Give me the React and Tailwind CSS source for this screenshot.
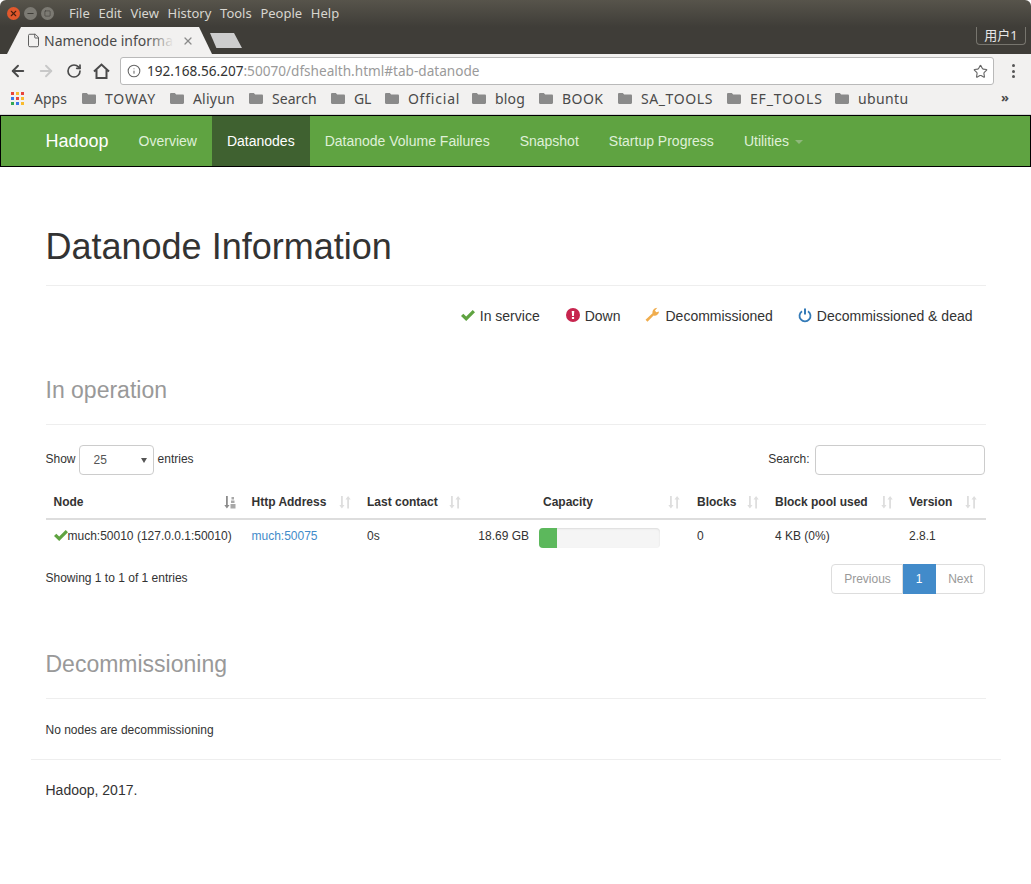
import { ArrowLeft, ArrowRight, RotateCw, Info, Star, File, X, Minus, Square } from 'lucide-react';

const bookmarks = [
  ['TOWAY', 'w-[88px]', 'tracking-[0.9px]'],
  ['Aliyun', 'w-[79px]', 'tracking-[0.25px]'],
  ['Search', 'w-[82px]', 'tracking-[0.1px]'],
  ['GL', 'w-[54px]', 'tracking-[0px]'],
  ['Official', 'w-[87px]', 'tracking-[0.8px]'],
  ['blog', 'w-[67px]', 'tracking-[0.25px]'],
  ['BOOK', 'w-[79px]', 'tracking-[0.5px]'],
  ['SA_TOOLS', 'w-[109px]', 'tracking-[0.6px]'],
  ['EF_TOOLS', 'w-[108px]', 'tracking-[0.9px]'],
  ['ubuntu', 'w-[80px]', 'tracking-[0.4px]'],
];

function Folder() {
  return (
    <svg width="14" height="11" viewBox="0 0 14 11" className="shrink-0">
      <path d="M0 1.200C0 .5.500 0 1.200 0h3.600l1.400 1.500h6.600c.7 0 1.200.5 1.200 1.200v7.100c0 .7-.5 1.200-1.200 1.200H1.200C.5 11 0 10.500 0 9.800z" fill="#8a8a8a" />
    </svg>
  );
}

function AppsGrid() {
  const colors = ['#e8453c', '#f9bb2d', '#e8453c', '#3b78e7', '#e8453c', '#f9bb2d', '#34a853', '#3b78e7', '#f9bb2d'];
  return (
    <div className="grid grid-cols-3 gap-[2px] w-[13px] h-[13px]">
      {colors.map((c, i) => (
        <svg key={i} width="3" height="3"><rect width="3" height="3" fill={c} /></svg>
      ))}
    </div>
  );
}

function SortIcon({ active }) {
  return (
    <svg width="12" height="13" viewBox="0 0 12 13" className="shrink-0">
      <path d="M2 0h1.800v9H5.500L2.900 12.500 0.300 9H2z" fill={active ? '#8c8c8c' : '#dedede'} />
      {active ? (
        <path d="M7.500 1h2.500v2.500H7.500zM7 4.500h3.500V7H7zM6.500 8h5v4.500h-5z" fill="#a8a8a8" />
      ) : (
        <path d="M8.200 12.500h1.800v-9H11.700L9.100 0 6.500 3.500H8.200z" fill="#dedede" />
      )}
    </svg>
  );
}

function CheckIcon() {
  return (
    <svg width="14" height="13" viewBox="0 0 14 13" className="shrink-0">
      <path d="M0 7l2.300-2.300 2.900 2.900L11.700 1 14 3.300 5.200 12z" fill="#5fa341" />
    </svg>
  );
}

function Header({ label, active, className = '' }) {
  return (
    <th className={`h-[37px] border-b-2 border-[#ddd] text-left font-bold align-top pt-[11px] ${className}`}>
      <div className="flex items-center justify-between pr-[8px] pl-2">
        <span>{label}</span>
        <SortIcon active={active} />
      </div>
    </th>
  );
}

export default function App() {
  return (
    <div className="w-[1031px] h-[884px] bg-white overflow-hidden font-['Liberation_Sans',sans-serif] text-[#333]">
      {/* window title bar */}
      <div className="h-[27px] flex items-center bg-gradient-to-b from-[#57544b] to-[#3f3d38] rounded-t-md pl-[7px] text-[13px] font-['Noto_Sans',sans-serif] text-[#d8d6d0]">
        <div className="flex items-center gap-[4px] w-[62px]">
          <span className="w-[13px] h-[13px] rounded-full bg-[#e2582c] flex items-center justify-center"><X size={9} strokeWidth={3} color="#4a2010" /></span>
          <span className="w-[13px] h-[13px] rounded-full bg-[#7c7a73] flex items-center justify-center"><Minus size={9} strokeWidth={3} color="#3f3d38" /></span>
          <span className="w-[13px] h-[13px] rounded-full bg-[#7c7a73] flex items-center justify-center"><Square size={7} strokeWidth={2} color="#3f3d38" /></span>
        </div>
        <div className="flex gap-[8.700px]">
          <span>File</span><span>Edit</span><span>View</span><span>History</span><span>Tools</span><span>People</span><span>Help</span>
        </div>
      </div>

      {/* tab strip */}
      <div className="h-[27px] bg-[#3f3d38] flex items-end pl-[7px] relative font-['Noto_Sans',sans-serif]">
        <div className="w-[205px] h-[27px] bg-[#f2f1f0] [clip-path:polygon(0_100%,14px_0,192px_0,100%_100%)] flex items-center pl-[19px] pr-[16px] relative">
          <File size={15} strokeWidth={1.500} color="#555" className="shrink-0" />
          <span className="ml-[3px] text-[14px] text-[#4a4a4a] whitespace-nowrap w-[132px] overflow-hidden">Namenode informa</span>
          <span className="absolute left-[140px] top-0 w-[27px] h-full bg-gradient-to-r from-transparent to-[#f2f1f0]" />
          <X size={12} strokeWidth={2.500} color="#8a8a8a" className="ml-[6px] shrink-0" />
        </div>
        <div className="w-[32px] h-[15px] ml-[-2px] mb-[6px] bg-[#cdcdcd] [clip-path:polygon(0_0,75%_0,100%_100%,20%_100%)]" />
        <div className="absolute right-[5px] top-0 w-[50px] h-[18px] border border-t-0 border-[#77756e] rounded-b-[4px] text-[13px] text-[#e6e6e6] flex items-center justify-center font-['Noto_Sans','Noto_Sans_CJK_SC',sans-serif]">
          用户1
        </div>
      </div>

      {/* toolbar */}
      <div className="h-[34px] bg-[#f2f1f0] flex items-center pl-[9px] pr-[16px]">
        <ArrowLeft size={18} strokeWidth={2.500} color="#4a4a4a" />
        <ArrowRight size={18} strokeWidth={2.500} color="#c8c8c8" className="ml-[10px]" />
        <RotateCw size={16} strokeWidth={2.500} color="#4a4a4a" className="ml-[11px]" />
        <svg width="17" height="16" viewBox="0 0 17 16" className="ml-[11px]">
          <path d="M1 8.500L8.500 1.500 16 8.500M3.500 7v8h10V7" fill="none" stroke="#4a4a4a" strokeWidth="2" />
        </svg>
        <div className="ml-[10px] w-[874px] h-[28px] bg-white border border-[#b9b9b9] rounded-[3px] flex items-center pl-[6px] pr-[5px]">
          <Info size={14} strokeWidth={1.800} color="#666" className="shrink-0" />
          <span className="ml-[6px] text-[13.600px] font-['Noto_Sans',sans-serif] text-[#9a9a9a] whitespace-nowrap"><span className="text-[#333]">192.168.56.207</span>:50070/dfshealth.html#tab-datanode</span>
          <Star size={15} strokeWidth={1.800} color="#666" className="ml-auto" />
        </div>
        <div className="ml-auto flex flex-col gap-[2.500px]">
          <span className="w-[3px] h-[3px] rounded-full bg-[#555]" />
          <span className="w-[3px] h-[3px] rounded-full bg-[#555]" />
          <span className="w-[3px] h-[3px] rounded-full bg-[#555]" />
        </div>
      </div>

      {/* bookmarks */}
      <div className="h-[27px] bg-[#f2f1f0] flex items-center pl-[11px] pb-[5px] text-[14px] font-['Noto_Sans',sans-serif] text-[#4a4a4a] border-b border-[#d4d4d4] relative">
        <AppsGrid />
        <span className="ml-[10px] mr-[15px]">Apps</span>
        <div className="flex items-center">
          {bookmarks.map(([name, width, tracking]) => (
            <div key={name} className={`flex items-center gap-[9px] ${width}`}>
              <Folder />
              <span className={tracking}>{name}</span>
            </div>
          ))}
        </div>
        <span className="absolute right-[22px] top-[0px] text-[13px] font-bold">»</span>
      </div>

      {/* navbar */}
      <nav className="h-[52px] bg-[#5fa341] border border-black flex items-stretch pl-[29.500px] text-[14px] text-[#dff0d8]">
        <a className="flex items-center px-[15px] text-[18px] text-white">Hadoop</a>
        <a className="flex items-center px-[15px]">Overview</a>
        <a className="flex items-center px-[15px] bg-[#3f6130] text-white">Datanodes</a>
        <a className="flex items-center px-[15px]">Datanode Volume Failures</a>
        <a className="flex items-center px-[15px]">Snapshot</a>
        <a className="flex items-center px-[15px]">Startup Progress</a>
        <a className="flex items-center px-[15px]">
          Utilities
          <span className="ml-[6px] mt-[2px] w-0 h-0 border-x-4 border-x-transparent border-t-4 border-t-[#8fb87c]" />
        </a>
      </nav>

      {/* content */}
      <main className="w-[970px] ml-[30.500px]">
        <div className="px-[15px]">
          <div className="mt-[60px] h-[59px] border-b border-[#eee]">
            <h1 className="text-[36px] leading-[40px] font-normal">Datanode Information</h1>
          </div>

          <div className="mt-[20px] h-[20px] flex justify-end items-center pr-[13px] text-[14px]">
            <span className="flex items-center gap-[5px]">
              <span className="mb-[2px]"><CheckIcon /></span>
              In service
            </span>
            <span className="flex items-center gap-[5px] ml-[26px]">
              <svg width="14" height="14" viewBox="0 0 14 14" className="mb-[2px]">
                <circle cx="7" cy="7" r="7" fill="#c7254e" />
                <path d="M5.700 3h2.600l-.4 5H6.100zM5.900 9h2.200v2H5.900z" fill="#fff" />
              </svg>
              Down
            </span>
            <span className="flex items-center gap-[5px] ml-[25px]">
              <svg width="15" height="15" viewBox="0 0 14 14" className="mb-[3px]">
                <path d="M0.500 11.800L7 5.800C6.700 3.500 8.500 0.800 11.500 0.800L9.300 3.200 10.500 5l2.600-.8C13 7 10 8.800 8 8L2.300 13.700z" fill="#f0ad4e" />
              </svg>
              Decommissioned
            </span>
            <span className="flex items-center gap-[5px] ml-[25px]">
              <svg width="14" height="15" viewBox="0 0 14 15" className="mb-[2px]">
                <path d="M4 3.200a5.500 5.500 0 1 0 6 0" fill="none" stroke="#337ab7" strokeWidth="1.800" />
                <path d="M7 0.500v6" fill="none" stroke="#337ab7" strokeWidth="2" />
              </svg>
              Decommissioned & dead
            </span>
          </div>

          <div className="mt-[50px] h-[49px] border-b border-[#eee] text-[23px] leading-[28px] text-[#999]">In operation</div>

          <div className="mt-[20px] h-[30px] flex items-center justify-between pr-[1px] text-[12px]">
            <div className="flex items-center gap-[3px]">
              <span className="pb-[2px]">Show</span>
              <div className="w-[75px] h-[30px] mr-[1px] border border-[#ccc] rounded-[4px] flex items-center pl-[14px] pr-[6px] text-[#555]">
                <span>25</span>
                <span className="ml-auto w-0 h-0 border-x-[3px] border-x-transparent border-t-[5px] border-t-[#555]" />
              </div>
              <span className="pb-[2px]">entries</span>
            </div>
            <div className="flex items-center gap-[5px]">
              <span className="pb-[2px]">Search:</span>
              <div className="w-[170px] h-[30px] border border-[#ccc] rounded-[4px]" />
            </div>
          </div>

          <table className="mt-[7px] w-[940px] table-fixed border-collapse text-[12px]">
            <colgroup>
              <col className="w-[198px]" />
              <col className="w-[115.500px]" />
              <col className="w-[110px]" />
              <col className="w-[61px]" />
              <col className="w-[159px]" />
              <col className="w-[78px]" />
              <col className="w-[134px]" />
              <col className="w-[84.500px]" />
            </colgroup>
            <thead>
              <tr>
                <Header label="Node" active />
                <Header label="Http Address" />
                <Header label="Last contact" />
                <th className="border-b-2 border-[#ddd]" />
                <th className="h-[37px] border-b-2 border-[#ddd] text-left font-bold align-top pt-[11px]">
                  <div className="flex items-center justify-between pl-[13px] pr-[9px]">
                    <span>Capacity</span>
                    <SortIcon />
                  </div>
                </th>
                <Header label="Blocks" />
                <Header label="Block pool used" />
                <Header label="Version" className="[&>div]:pr-[9px]" />
              </tr>
            </thead>
            <tbody>
              <tr className="h-[34px]">
                <td className="pl-2 pb-[2px] whitespace-nowrap">
                  <div className="flex items-center">
                    <CheckIcon />
                    <span>much:50010 (127.0.0.1:50010)</span>
                  </div>
                </td>
                <td className="pl-2 pb-[2px] text-[#428bca]">much:50075</td>
                <td className="pl-2 pb-[2px]">0s</td>
                <td className="text-right whitespace-nowrap pr-[1px] pb-[2px]">18.69 GB</td>
                <td className="pl-[9px] pt-[2px]">
                  <div className="w-[121px] h-[20px] bg-[#f5f5f5] rounded-[4px] overflow-hidden shadow-[inset_0_1px_2px_rgba(0,0,0,0.1)]">
                    <div className="w-[18px] h-full bg-[#5cb85c]" />
                  </div>
                </td>
                <td className="pl-2 pb-[2px]">0</td>
                <td className="pl-2 pb-[2px]">4 KB (0%)</td>
                <td className="pl-2 pb-[2px]">2.8.1</td>
              </tr>
            </tbody>
          </table>

          <div className="mt-[11px] h-[30px] flex items-start justify-between pr-[1px] text-[12px]">
            <span className="mt-[5px]">Showing 1 to 1 of 1 entries</span>
            <div className="flex h-[30px] text-[#999]">
              <span className="w-[72px] pl-[2px] border border-[#ddd] rounded-l-[4px] flex items-center justify-center">Previous</span>
              <span className="w-[33px] bg-[#428bca] text-white flex items-center justify-center">1</span>
              <span className="w-[49px] pl-[2px] border border-l-0 border-[#ddd] rounded-r-[4px] flex items-center justify-center">Next</span>
            </div>
          </div>

          <div className="mt-[56px] h-[49px] border-b border-[#eee] text-[23px] leading-[28px] text-[#999]">Decommissioning</div>
          <p className="mt-[23px] text-[12px] leading-[17px]">No nodes are decommissioning</p>
        </div>

        <footer className="mt-[20px] border-t border-[#eee] px-[15px] pt-[20px] text-[14px] leading-[20px]">Hadoop, 2017.</footer>
      </main>
    </div>
  );
}
